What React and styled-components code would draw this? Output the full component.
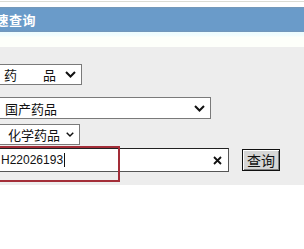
import React from "react";
import styled, { createGlobalStyle } from "styled-components";

const GlobalStyle = createGlobalStyle`
  html, body {
    margin: 0;
    padding: 0;
    background: #ffffff;
    overflow: hidden;
  }
  body {
    font-family: "Noto Sans CJK SC", "Liberation Sans", sans-serif;
  }
`;

const Page = styled.div`
  width: 304px;
  height: 249px;
  display: flex;
  flex-direction: column;
  overflow: hidden;
`;

const TopRule = styled.div`
  height: 1px;
  margin-top: 1px;
  background: #dcdcd4;
`;

const Header = styled.div`
  margin-top: 5px;
  height: 25px;
  display: flex;
  align-items: center;
  background: linear-gradient(
    to bottom,
    #7898b6 0px,
    #6a9bc9 2px,
    #6a9bc9 23px,
    #7596b6 25px
  );
`;

const Title = styled.h2`
  margin: 0 0 0 -18px;
  font-size: 13px;
  font-weight: 700;
  color: #ffffff;
  letter-spacing: 0.5px;
  white-space: nowrap;
`;

const HeaderShade = styled.div`
  height: 15px;
  background: linear-gradient(to bottom, #ecfcff 0px, #f4fdfd 4px, #fdfffa 5px);
`;

const Panel = styled.div`
  height: 138px;
  background: #ededed;
  display: flex;
  flex-direction: column;
  padding-top: 17px;
  box-sizing: border-box;
`;

const Row = styled.div`
  display: flex;
  align-items: center;
  margin-top: ${p => p.gap || 0}px;
  position: relative;
`;

const SelectBox = styled.div`
  box-sizing: border-box;
  margin-left: -2px;
  width: ${p => p.w}px;
  height: ${p => p.h}px;
  background: #ffffff;
  border: 1px solid #7a7a7a;
  display: flex;
  align-items: center;
  justify-content: space-between;
  gap: 6px;
  padding: 0 5px 0 ${p => p.pad}px;
  font-size: 13px;
  color: #111111;
  white-space: pre;
`;

const Chevron = () => (
  <svg width="11" height="7" viewBox="0 0 11 7">
    <path d="M1 1 L5.5 5.5 L10 1" fill="none" stroke="#111" strokeWidth="2" />
  </svg>
);

const TextInput = styled.div`
  box-sizing: border-box;
  margin-left: -2px;
  width: 231px;
  height: 24px;
  background: #ffffff;
  border: 1px solid #555555;
  border-top-color: #222222;
  display: flex;
  align-items: center;
  justify-content: space-between;
  padding: 0 6px 0 2px;
  font-family: "Liberation Sans", sans-serif;
  font-size: 12px;
  color: #111111;
`;

const Caret = styled.span`
  display: inline-block;
  width: 1px;
  height: 14px;
  margin-left: 1px;
  background: #111111;
  vertical-align: middle;
`;

const ClearIcon = () => (
  <svg width="9" height="9" viewBox="0 0 9 9">
    <path d="M1 1 L8 8 M8 1 L1 8" stroke="#111" strokeWidth="1.8" />
  </svg>
);

const QueryButton = styled.button`
  margin-left: 13px;
  width: 38px;
  height: 22px;
  padding: 0;
  background: #d6d6d6;
  border: 1px solid #111111;
  box-shadow: inset 1px 1px 0 #ffffff, inset -1px -1px 0 #808080;
  font-family: "Noto Sans CJK SC", sans-serif;
  font-size: 14px;
  color: #111111;
  line-height: 18px;
`;

const Highlight = styled.div`
  position: absolute;
  left: -4px;
  top: -2px;
  width: 124px;
  height: 36px;
  box-sizing: border-box;
  border: 2px solid #a32d38;
  pointer-events: none;
`;

export default function App() {
  return (
    <>
      <GlobalStyle />
      <Page>
        <TopRule />
        <Header>
          <Title>快速查询</Title>
        </Header>
        <HeaderShade />
        <Panel>
          <Row>
            <SelectBox w={84} h={21} pad={5}>
              <span>药　　品</span>
              <Chevron />
            </SelectBox>
          </Row>
          <Row gap={12}>
            <SelectBox w={213} h={22} pad={6}>
              <span>国产药品</span>
              <Chevron />
            </SelectBox>
          </Row>
          <Row gap={5}>
            <SelectBox w={82} h={21} pad={9}>
              <span>化学药品</span>
              <Chevron />
            </SelectBox>
          </Row>
          <Row gap={3}>
            <TextInput>
              <span>
                H22026193
                <Caret />
              </span>
              <ClearIcon />
            </TextInput>
            <QueryButton>查询</QueryButton>
            <Highlight />
          </Row>
        </Panel>
      </Page>
    </>
  );
}
